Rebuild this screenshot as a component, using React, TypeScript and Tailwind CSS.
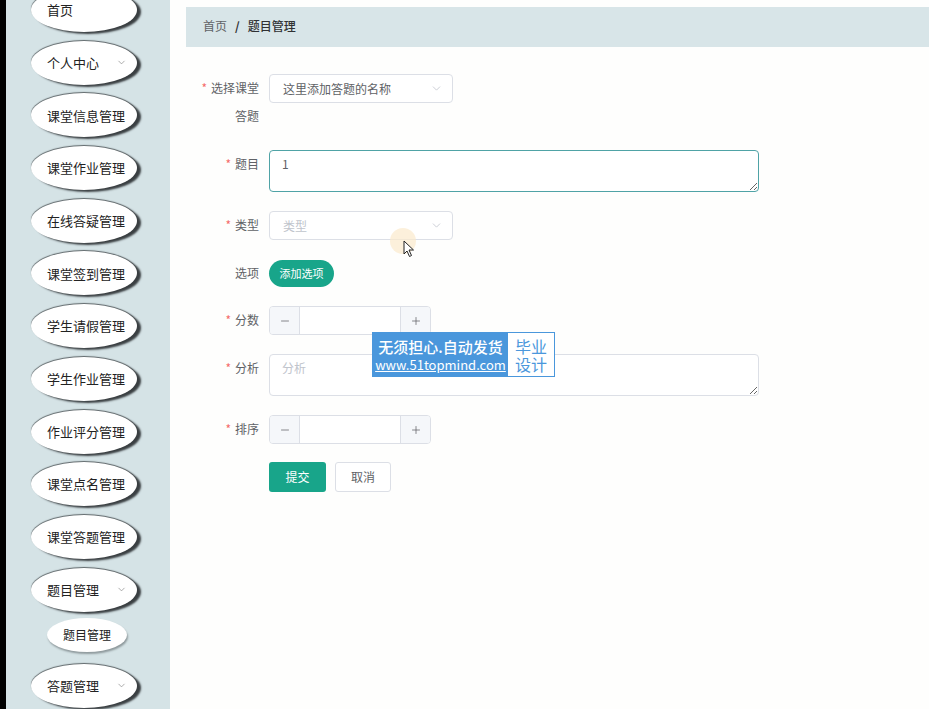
import { ChevronDown, Plus, Minus } from 'lucide-react';

const menu: { label: string; arrow?: boolean }[] = [
  { label: '首页' },
  { label: '个人中心', arrow: true },
  { label: '课堂信息管理' },
  { label: '课堂作业管理' },
  { label: '在线答疑管理' },
  { label: '课堂签到管理' },
  { label: '学生请假管理' },
  { label: '学生作业管理' },
  { label: '作业评分管理' },
  { label: '课堂点名管理' },
  { label: '课堂答题管理' },
  { label: '题目管理', arrow: true },
];

function MenuPill({ label, arrow }: { label: string; arrow?: boolean }) {
  return (
    <div className="h-[44px] w-[106px] ml-[25px] rounded-[50%] bg-white shadow-[4px_2px_2px_#3a3f42,0_-1px_1px_#5f676a] flex items-center pl-[16px] pr-[10px] text-[13px] text-[#222] shrink-0">
      <span className="flex-1 whitespace-nowrap">{label}</span>
      {arrow && <ChevronDown className="w-[11px] h-[11px] text-[#888]" strokeWidth={1.5} />}
    </div>
  );
}

function Label({ text, required = true }: { text: React.ReactNode; required?: boolean }) {
  return (
    <div className="w-[89px] text-right text-[12px] leading-[28px] text-[#606266] shrink-0">
      {required && <span className="text-[#f56c6c] mr-[4px]">*</span>}
      {text}
    </div>
  );
}

function NumberInput() {
  return (
    <div className="w-[162px] h-[29px] border border-[#dcdfe6] rounded-[4px] flex overflow-hidden">
      <div className="w-[30px] bg-[#f5f7fa] border-r border-[#dcdfe6] flex items-center justify-center text-[#606266]">
        <Minus className="w-[12px] h-[12px]" strokeWidth={1.5} />
      </div>
      <div className="flex-1 bg-white" />
      <div className="w-[30px] bg-[#f5f7fa] border-l border-[#dcdfe6] flex items-center justify-center text-[#606266]">
        <Plus className="w-[12px] h-[12px]" strokeWidth={1.5} />
      </div>
    </div>
  );
}

function Select({ text, placeholder }: { text: string; placeholder?: boolean }) {
  return (
    <div className="w-[184px] h-[29px] border border-[#dcdfe6] rounded-[4px] bg-white flex items-center pl-[13px] pr-[9px]">
      <span className={`flex-1 text-[12px] ${placeholder ? 'text-[#c0c4cc]' : 'text-[#606266]'}`}>{text}</span>
      <ChevronDown className="w-[13px] h-[13px] text-[#c0c4cc]" strokeWidth={1.5} />
    </div>
  );
}

export default function App() {
  return (
    <div
      className="w-[929px] h-[709px] overflow-hidden flex bg-[#fefefd]"
      style={{ fontFamily: '"Noto Sans CJK SC", "Noto Sans", sans-serif' }}
    >
      {/* left strip */}
      <div className="w-[6px] bg-black shrink-0" />

      {/* Sidebar */}
      <div className="w-[164px] bg-[#d5e3e6] shrink-0 overflow-hidden">
        <div className="flex flex-col -mt-[12px] gap-[8.7px]">
          {menu.map(m => (
            <MenuPill key={m.label} label={m.label} arrow={m.arrow} />
          ))}
        </div>
        <div className="mt-[6px] h-[34px] w-[80px] ml-[41px] rounded-[50%] bg-white shadow-[1px_2px_2px_#8f9a9d] flex items-center justify-center text-[12px] text-[#222]">
          题目管理
        </div>
        <div className="mt-[12px]">
          <MenuPill label="答题管理" arrow />
        </div>
      </div>

      {/* Main */}
      <div className="flex-1 pt-[7px] pl-[16px] relative">
        <div className="h-[40px] bg-[#d8e5e8] flex items-center pl-[17px] pb-[2px] text-[12px]">
          <span className="text-[#606266]">首页</span>
          <span className="mx-[8px] font-bold text-[#303133]">/</span>
          <span className="text-[#303133] font-medium">题目管理</span>
        </div>

        <div className="mt-[27px] -ml-[16px] flex flex-col">
          {/* 选择课堂答题 */}
          <div className="flex gap-[10px] mb-[20px]">
            <div className="w-[89px] text-right text-[12px] leading-[28px] text-[#606266] shrink-0">
              <div><span className="text-[#f56c6c] mr-[4px]">*</span>选择课堂</div>
              <div>答题</div>
            </div>
            <Select text="这里添加答题的名称" />
          </div>

          {/* 题目 */}
          <div className="flex gap-[10px] mb-[19px]">
            <Label text="题目" />
            <textarea
              readOnly
              defaultValue="1"
              className="w-[490px] h-[42px] border border-[#4fa3a6] rounded-[4px] bg-white px-[12px] py-[4px] text-[12px] text-[#606266] outline-none"
            />
          </div>

          {/* 类型 */}
          <div className="flex gap-[10px] mb-[19px]">
            <Label text="类型" />
            <Select text="类型" placeholder />
          </div>

          {/* 选项 */}
          <div className="flex gap-[10px] mb-[19px] items-center">
            <Label text="选项" required={false} />
            <button className="w-[65px] h-[27px] rounded-full bg-[#18a58a] text-white text-[11px]">添加选项</button>
          </div>

          {/* 分数 */}
          <div className="flex gap-[10px] mb-[19px]">
            <Label text="分数" />
            <NumberInput />
          </div>

          {/* 分析 */}
          <div className="flex gap-[10px] mb-[19px]">
            <Label text="分析" />
            <textarea
              readOnly
              placeholder="分析"
              className="w-[490px] h-[42px] border border-[#dcdfe6] rounded-[4px] bg-white px-[12px] py-[4px] text-[12px] text-[#606266] placeholder:text-[#c0c4cc] outline-none"
            />
          </div>

          {/* 排序 */}
          <div className="flex gap-[10px] mb-[18px]">
            <Label text="排序" />
            <NumberInput />
          </div>

          {/* buttons */}
          <div className="flex gap-[9px] pl-[99px]">
            <button className="w-[57px] h-[30px] rounded-[3px] bg-[#18a58a] text-white text-[12px]">提交</button>
            <button className="w-[56px] h-[30px] rounded-[3px] bg-white border border-[#dcdfe6] text-[#606266] text-[12px]">取消</button>
          </div>
        </div>

        {/* watermark */}
        <div className="absolute left-[202px] top-[332px] h-[45px] flex border border-[#4a97dc]">
          <div className="w-[135px] bg-[#4a97dc] text-white flex flex-col items-center justify-center leading-none">
            <div className="text-[15px] font-medium">无须担心.自动发货</div>
            <div className="text-[13px] underline mt-[4px] whitespace-nowrap">www.51topmind.com</div>
          </div>
          <div className="w-[46px] bg-white text-[#4a97dc] text-[16px] leading-[18px] flex flex-col items-center justify-center">
            <div>毕业</div>
            <div>设计</div>
          </div>
        </div>

        {/* cursor */}
        <div className="absolute left-[220px] top-[228px] w-[26px] h-[26px] rounded-full bg-[#fbe9cc] opacity-70" />
        <svg className="absolute left-[233px] top-[240px]" width="12" height="18" viewBox="0 0 12 18">
          <path d="M1 1 L1 14 L4 11 L6.5 16.5 L8.5 15.5 L6 10 L10.5 10 Z" fill="white" stroke="#222" strokeWidth="1" strokeLinejoin="round" />
        </svg>
      </div>
    </div>
  );
}
